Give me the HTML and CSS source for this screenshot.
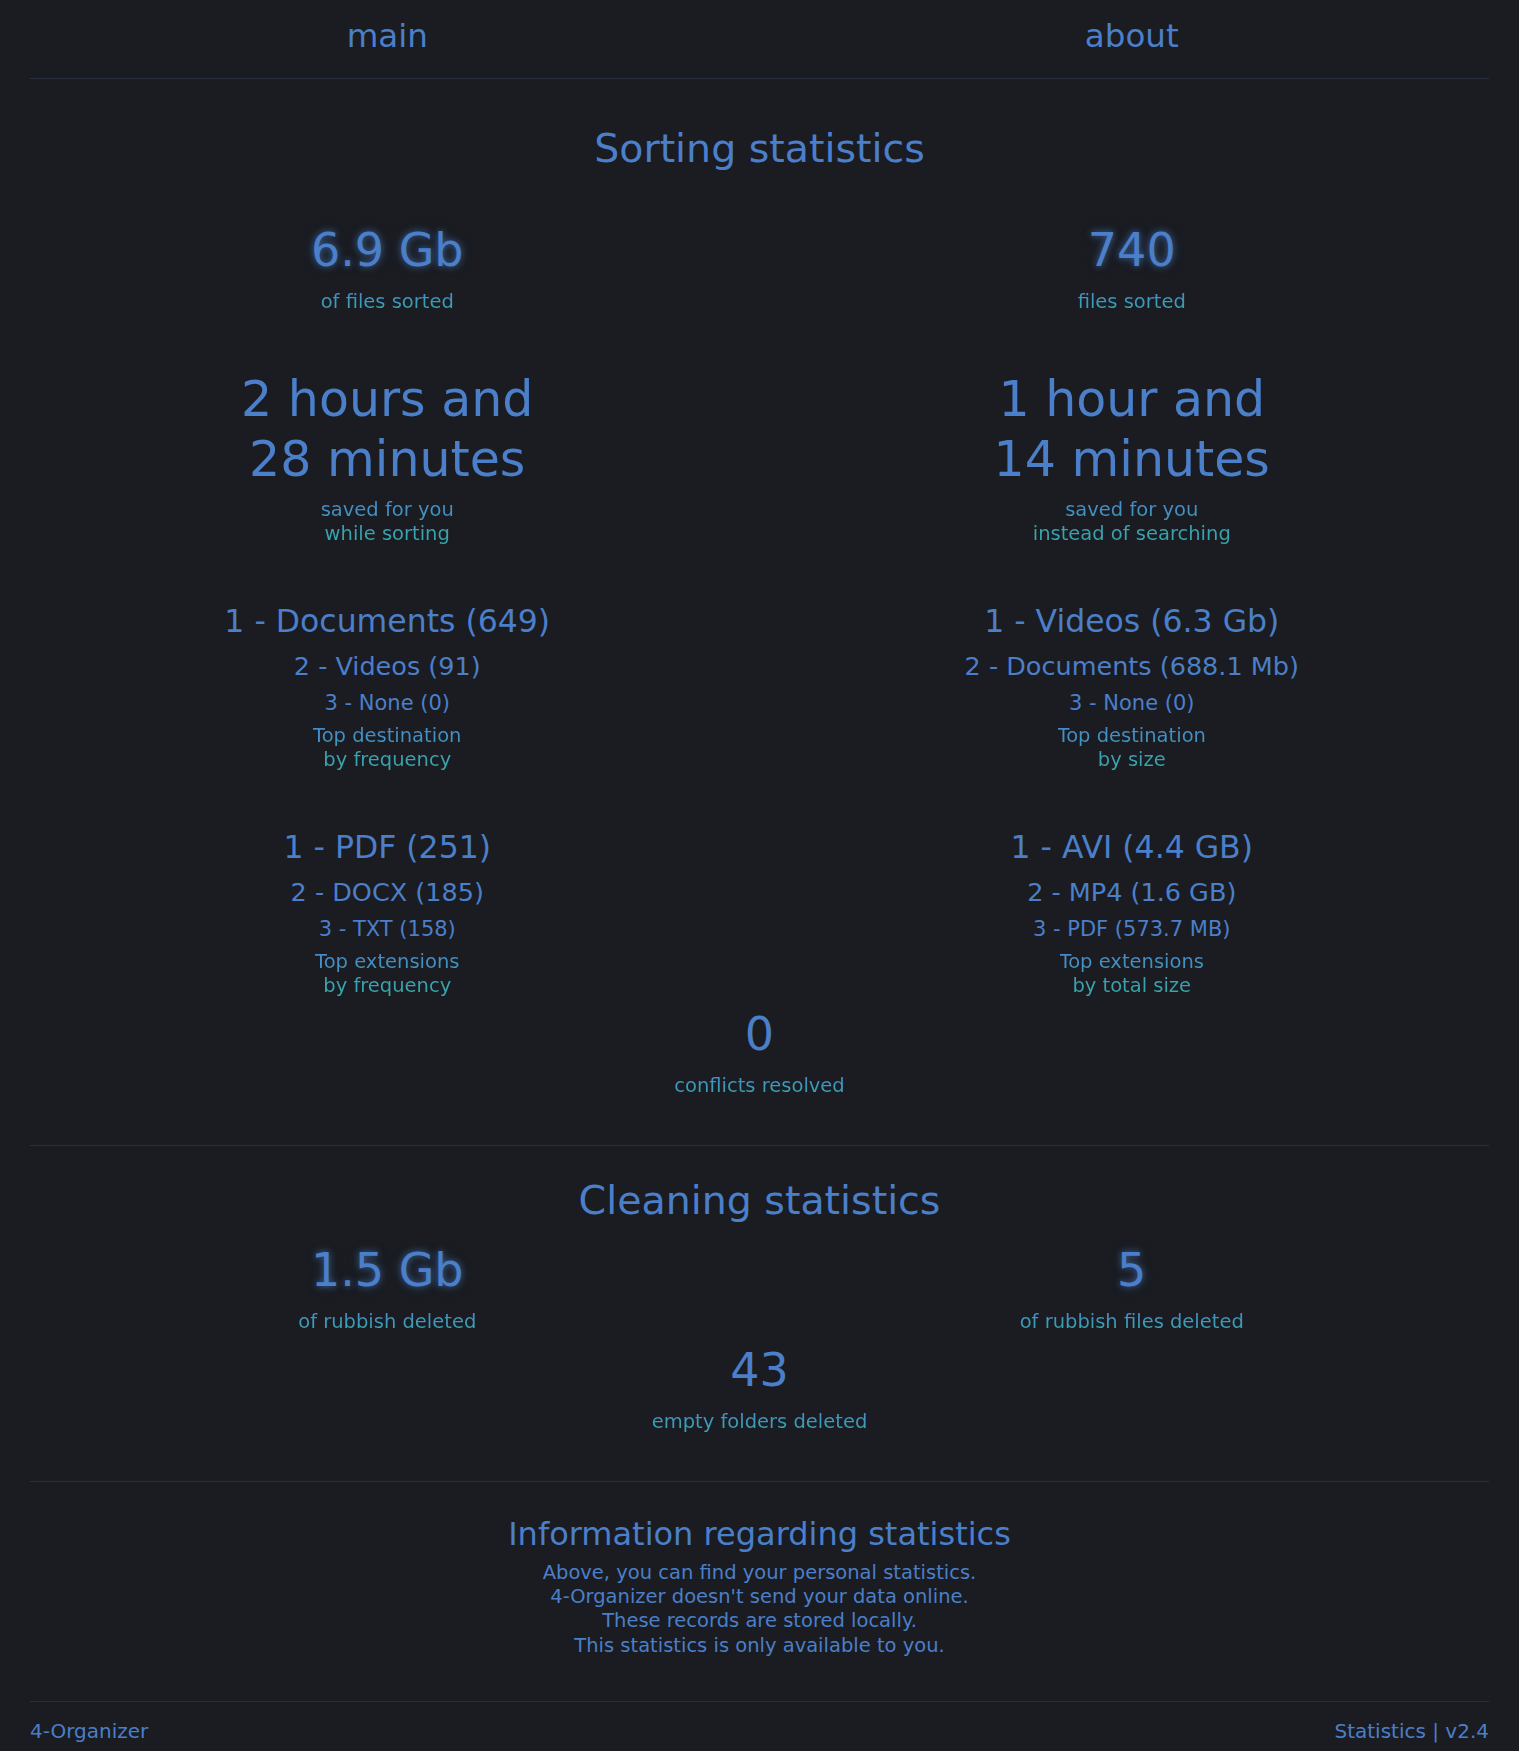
FILE: index.html
```html
<!DOCTYPE html>
<html lang="en">
<head>
<meta charset="utf-8">
<title>4-Organizer — Statistics</title>
<link rel="stylesheet" href="styles.css">
</head>
<body>
<header class="nav">
  <a class="nav-link" href="#">main</a>
  <a class="nav-link" href="#">about</a>
</header>
<hr class="rule">

<section class="sorting">
  <h2 class="section-title">Sorting statistics</h2>
  <div class="grid">
    <div class="stat">
      <div class="num glow">6.9 Gb</div>
      <div class="label">of files sorted</div>
    </div>
    <div class="stat">
      <div class="num glow">740</div>
      <div class="label">files sorted</div>
    </div>

    <div class="stat">
      <div class="time">2 hours and<br>28 minutes</div>
      <div class="label label-time">saved for you<br>while sorting</div>
    </div>
    <div class="stat">
      <div class="time">1 hour and<br>14 minutes</div>
      <div class="label label-time">saved for you<br>instead of searching</div>
    </div>

    <div class="stat">
      <div class="rank1">1 - Documents (649)</div>
      <div class="rank2">2 - Videos (91)</div>
      <div class="rank3">3 - None (0)</div>
      <div class="label label-rank">Top destination<br>by frequency</div>
    </div>
    <div class="stat">
      <div class="rank1">1 - Videos (6.3 Gb)</div>
      <div class="rank2">2 - Documents (688.1 Mb)</div>
      <div class="rank3">3 - None (0)</div>
      <div class="label label-rank">Top destination<br>by size</div>
    </div>

    <div class="stat">
      <div class="rank1">1 - PDF (251)</div>
      <div class="rank2">2 - DOCX (185)</div>
      <div class="rank3">3 - TXT (158)</div>
      <div class="label label-rank">Top extensions<br>by frequency</div>
    </div>
    <div class="stat">
      <div class="rank1">1 - AVI (4.4 GB)</div>
      <div class="rank2">2 - MP4 (1.6 GB)</div>
      <div class="rank3">3 - PDF (573.7 MB)</div>
      <div class="label label-rank">Top extensions<br>by total size</div>
    </div>
  </div>
  <div class="stat stat-center stat-conflicts">
    <div class="num">0</div>
    <div class="label">conflicts resolved</div>
  </div>
</section>

<hr class="rule">

<section class="cleaning">
  <h2 class="section-title">Cleaning statistics</h2>
  <div class="grid grid-tight">
    <div class="stat">
      <div class="num glow">1.5 Gb</div>
      <div class="label">of rubbish deleted</div>
    </div>
    <div class="stat">
      <div class="num glow">5</div>
      <div class="label">of rubbish files deleted</div>
    </div>
  </div>
  <div class="stat stat-center stat-folders">
    <div class="num">43</div>
    <div class="label">empty folders deleted</div>
  </div>
</section>

<hr class="rule">

<section class="info">
  <h3 class="info-title">Information regarding statistics</h3>
  <p class="info-text">Above, you can find your personal statistics.<br>4-Organizer doesn't send your data online.<br>These records are stored locally.<br>This statistics is only available to you.</p>
</section>

<hr class="rule">

<footer class="footer">
  <span>4-Organizer</span>
  <span>Statistics | v2.4</span>
</footer>
</body>
</html>
```

FILE: styles.css
```css
html, body {
  margin: 0;
  padding: 0;
  background: #1a1c21;
}

body {
  font-family: "DejaVu Sans", "Liberation Sans", sans-serif;
  color: #4b7fc9;
  text-align: center;
  min-height: 1751px;
}

.nav {
  display: grid;
  grid-template-columns: 1fr 1fr;
  margin: 0 15px;
  padding: 16px 0 22px;
}

.nav-link {
  font-size: 32.5px;
  line-height: 40px;
  color: #4b7fc9;
  text-decoration: none;
}

.rule {
  margin: 0 30px;
  border: 0;
  border-top: 1px solid #27303c;
  height: 0;
}

.section-title {
  margin: 0;
  font-weight: normal;
  font-size: 39.5px;
  line-height: 48px;
  color: #4b7fc9;
}

.sorting {
  padding: 45px 0 47px;
}

.sorting .section-title {
  margin-bottom: 50px;
}

.grid {
  display: grid;
  grid-template-columns: 1fr 1fr;
  row-gap: 56px;
  margin: 0 15px;
}

.stat {
  display: flex;
  flex-direction: column;
  align-items: center;
}

.num {
  font-size: 46px;
  line-height: 56px;
  color: #4b7fc9;
}

.glow {
  text-shadow: 0 0 6px rgba(80, 140, 230, 0.55), 0 0 12px rgba(80, 140, 230, 0.25);
}

.time {
  font-size: 49px;
  line-height: 60px;
  color: #4b7fc9;
}

.rank1 {
  font-size: 31.5px;
  line-height: 40px;
}

.rank2 {
  font-size: 25.5px;
  line-height: 32px;
  margin-top: 9px;
}

.rank3 {
  font-size: 21px;
  line-height: 28px;
  margin-top: 7px;
}

.label {
  display: inline-block;
  margin-top: 12px;
  font-size: 19.5px;
  line-height: 24px;
  background: linear-gradient(180deg, #4a86cc 0%, #3c9cb8 55%, #36aaa6 100%);
  -webkit-background-clip: text;
  background-clip: text;
  color: transparent;
}

.label-time {
  margin-top: 8px;
  line-height: 23.5px;
}

.label-rank {
  margin-top: 7px;
  line-height: 23.5px;
}

.stat-conflicts {
  margin-top: 9px;
}

.cleaning {
  padding: 30px 0 47px;
}

.cleaning .section-title {
  margin-bottom: 18px;
}

.grid-tight {
  row-gap: 0;
}

.stat-folders {
  margin-top: 8px;
}

.info {
  padding: 32px 0 43px;
}

.info-title {
  margin: 0;
  font-weight: normal;
  font-size: 32px;
  line-height: 40px;
  color: #4b7fc9;
}

.info-text {
  margin: 7px 0 0;
  font-size: 19.5px;
  line-height: 24.2px;
  color: #4b7fc9;
}

.footer {
  display: flex;
  justify-content: space-between;
  margin: 0 30px;
  padding-top: 17px;
  font-size: 20px;
  line-height: 24px;
  color: #4b7fc9;
}
```
